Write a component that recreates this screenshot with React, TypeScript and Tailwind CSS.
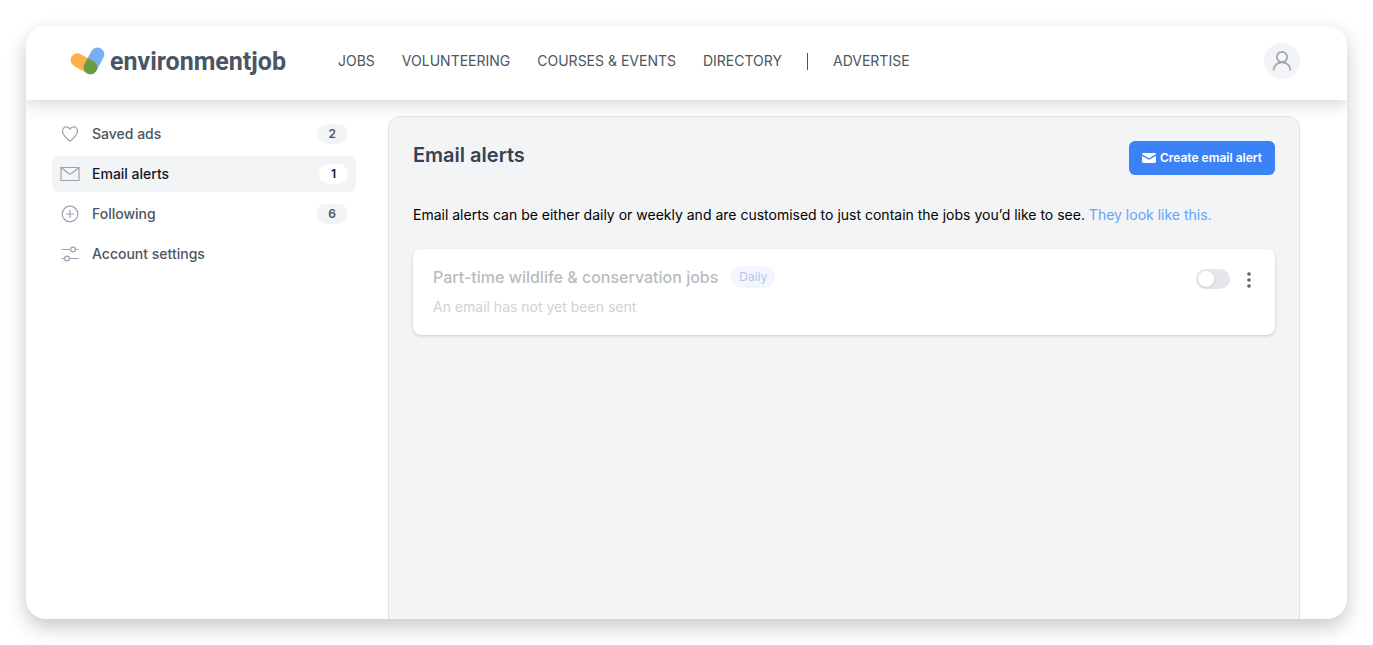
import type { ReactNode } from "react";

type SideItem = { label: string; count?: number; active?: boolean; icon: ReactNode };

const iconProps = {
  width: 20,
  height: 20,
  viewBox: "0 0 20 20",
  fill: "none",
  stroke: "currentColor",
  strokeWidth: 1.2,
  "aria-hidden": true,
} as const;

const items: SideItem[] = [
  {
    label: "Saved ads",
    count: 2,
    icon: (
      <svg {...iconProps}>
        <path
          strokeLinejoin="round"
          d="M10 17.2C7.6 15.4 2.5 11.4 2.5 7.1C2.5 4.7 4.2 2.9 6.3 2.9C8 2.9 9.3 3.8 10 5.1C10.7 3.8 12 2.9 13.7 2.9C15.8 2.9 17.5 4.7 17.5 7.1C17.5 11.4 12.4 15.4 10 17.2Z"
        />
      </svg>
    ),
  },
  {
    label: "Email alerts",
    count: 1,
    active: true,
    icon: (
      <svg {...iconProps}>
        <path d="M1 3.5H19V16.5H1ZM1.3 3.8L8.6 9.4Q10 10.4 11.4 9.4L18.7 3.8" />
      </svg>
    ),
  },
  {
    label: "Following",
    count: 6,
    icon: (
      <svg {...iconProps}>
        <circle cx="10" cy="10" r="7.8" />
        <path d="M10 6V14M6 10H14" />
      </svg>
    ),
  },
  {
    label: "Account settings",
    icon: (
      <svg {...iconProps}>
        <path d="M1.5 5.5H10.5M15.5 5.5H18.5M1.5 14.5H4.5M9.5 14.5H18.5" />
        <circle cx="13" cy="5.5" r="2.4" />
        <circle cx="7" cy="14.5" r="2.4" />
      </svg>
    ),
  },
];

const navLinks = ["JOBS", "VOLUNTEERING", "COURSES & EVENTS", "DIRECTORY"];

function Logo() {
  return (
    <a href="#home" className="flex items-center gap-[3px] text-[#4b5563]">
      <svg width="38" height="30" viewBox="0 0 38 30" aria-hidden="true">
        <defs>
          <clipPath id="pill">
            <rect x="-6.8" y="-21.8" width="13.6" height="28.6" rx="6.8" transform="translate(21.5 21.5) rotate(27.8)" />
          </clipPath>
        </defs>
        <rect x="-6.8" y="-21.8" width="13.6" height="28.6" rx="6.8" fill="#ffb04d" transform="translate(21.5 21.5) rotate(-60.7)" />
        <rect x="-6.8" y="-21.8" width="13.6" height="28.6" rx="6.8" fill="#78aff2" transform="translate(21.5 21.5) rotate(27.8)" />
        <g clipPath="url(#pill)">
          <rect x="-6.8" y="-21.8" width="13.6" height="28.6" rx="6.8" fill="#6b9c41" transform="translate(21.5 21.5) rotate(-60.7)" />
        </g>
      </svg>
      <span className="pt-0.5 font-[Roboto,sans-serif] text-[25px] leading-8 font-bold">environmentjob</span>
    </a>
  );
}

function Header() {
  return (
    <header className="relative z-10 flex h-[74px] shrink-0 items-center bg-white pr-[47px] pb-1 pl-[43px] shadow-[0_4px_16px_rgba(0,0,0,0.17)]">
      <Logo />
      <nav className="ml-[52px] flex items-center gap-[27px] text-sm text-[#4b5563]">
        {navLinks.map((l) => (
          <a key={l} href="#nav">{l}</a>
        ))}
        <span className="-mx-0.5 h-[17px] w-px bg-[#4b5563]" />
        <a href="#advertise">ADVERTISE</a>
      </nav>
      <button aria-label="Account" className="ml-auto flex size-9 items-center justify-center rounded-full bg-[#f3f4f6] text-[#9ca3af]">
        <svg width="20" height="22" viewBox="0 0 20 22" fill="none" stroke="currentColor" strokeWidth="1.7" aria-hidden="true">
          <circle cx="10" cy="7" r="5.2" />
          <path d="M1.6 20.5C1.6 15.5 5.2 12.3 10 12.3C14.8 12.3 18.4 15.5 18.4 20.5" />
        </svg>
      </button>
    </header>
  );
}

function Sidebar() {
  return (
    <aside className="flex w-[304px] shrink-0 flex-col gap-1">
      {items.map((it) => (
        <a
          key={it.label}
          href="#section"
          className={
            it.active
              ? "flex h-9 items-center rounded-md bg-[#f3f4f6] px-2 text-sm font-medium text-[#111827]"
              : "flex h-9 items-center rounded-md px-2 text-sm font-medium text-[#4b5563]"
          }
        >
          <span className="mr-3 text-[#9ca3af]">{it.icon}</span>
          {it.label}
          {it.count !== undefined && (
            <span
              className={
                it.active
                  ? "ml-auto rounded-full bg-white px-3 py-0.5 text-xs font-semibold"
                  : "ml-auto rounded-full bg-[#f3f4f6] px-3 py-0.5 text-xs font-semibold"
              }
            >
              {it.count}
            </span>
          )}
        </a>
      ))}
    </aside>
  );
}

function AlertCard() {
  return (
    <article className="mt-[22px] flex items-start justify-between rounded-lg bg-white px-5 py-4 shadow-[0_1px_3px_rgba(0,0,0,0.18)]">
      <div>
        <div className="flex items-center gap-[13px]">
          <h2 className="text-base leading-6 font-medium text-[#b9bbbe]">Part-time wildlife &amp; conservation jobs</h2>
          <span className="rounded-full bg-[#f2f7ff] px-2 py-0.5 text-xs leading-[18px] text-[#b9c2ea]">Daily</span>
        </div>
        <p className="mt-1.5 text-sm leading-6 text-[#d0d2d5]">An email has not yet been sent</p>
      </div>
      <div className="flex items-center gap-[13px] pt-1">
        <label className="relative inline-flex">
          <input type="checkbox" aria-label="Enable alert" className="peer h-5 w-[34px] appearance-none rounded-full bg-[#e5e7eb]" />
          <span className="pointer-events-none absolute top-0.5 left-0.5 size-4 rounded-full bg-white shadow-sm peer-checked:left-4" />
        </label>
        <button aria-label="More options" className="flex h-5 w-3 items-center justify-center pt-0.5 text-[#5b6270]">
          <svg width="4" height="16" viewBox="0 0 4 16" fill="currentColor" aria-hidden="true">
            <circle cx="2" cy="2" r="1.8" />
            <circle cx="2" cy="8" r="1.8" />
            <circle cx="2" cy="14" r="1.8" />
          </svg>
        </button>
      </div>
    </article>
  );
}

export default function App() {
  return (
    <div className="h-screen bg-white p-[26px] font-[Inter,sans-serif]">
      <div className="flex h-full flex-col overflow-hidden rounded-[20px] bg-white shadow-[0_8px_20px_rgba(0,0,0,0.22)]">
        <Header />
        <div className="flex min-h-0 flex-1 gap-8 pt-4 pr-[47px] pl-[26px]">
          <Sidebar />
          <main className="min-w-0 flex-1 rounded-t-xl border border-b-0 border-[#e1e3e7] bg-[#f3f4f6] px-6 pt-6">
            <div className="flex items-start justify-between">
              <h1 className="text-xl leading-7 font-semibold text-[#374151]">Email alerts</h1>
              <button className="flex h-[34px] items-center gap-1 rounded-md bg-[#3b82f6] px-[13px] text-xs font-semibold text-white">
                <svg width="14" height="10" viewBox="0 0 14 10" aria-hidden="true">
                  <path fill="currentColor" d="M1.2 0H12.8Q14 0 14 1.3L7 5.2L0 1.3Q0 0 1.2 0ZM0 2.9L7 6.7L14 2.9V8.6Q14 10 12.7 10H1.3Q0 10 0 8.6Z" />
                </svg>
                Create email alert
              </button>
            </div>
            <p className="mt-7 text-sm leading-6 text-black">
              Email alerts can be either daily or weekly and are customised to just contain the jobs you’d like to see.{" "}
              <a href="#example" className="text-[#60a5fa]">They look like this.</a>
            </p>
            <AlertCard />
          </main>
        </div>
      </div>
    </div>
  );
}
